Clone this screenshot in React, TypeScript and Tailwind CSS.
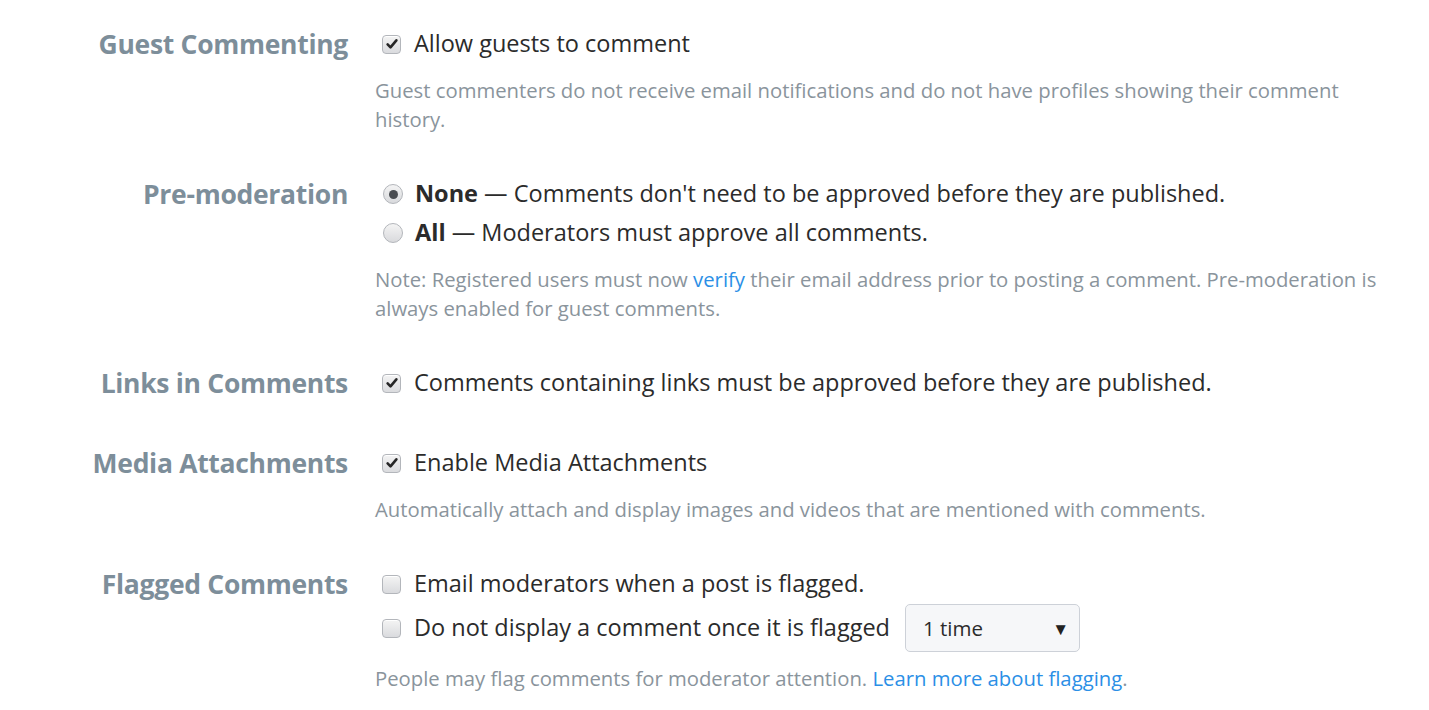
import React from "react";

function Check({ checked }: { checked?: boolean }) {
  return (
    <span className="mr-[13px] ml-[7px] flex h-[19px] w-[19px] shrink-0 items-center justify-center rounded-[4px] border border-[#b3b6bb] bg-gradient-to-b from-[#f4f4f4] to-[#dadbde] shadow-[inset_0_1px_0_#fff]">
      {checked && (
        <svg viewBox="0 0 16 16" className="h-[14px] w-[14px]">
          <path d="M3 8.5 L6.3 11.8 L13 3.8" fill="none" stroke="#262626" strokeWidth="3" strokeLinecap="round" strokeLinejoin="round" />
        </svg>
      )}
    </span>
  );
}

function Radio({ checked }: { checked?: boolean }) {
  return (
    <span className="mr-[12px] ml-[8px] flex h-[20px] w-[20px] shrink-0 items-center justify-center rounded-full border border-[#b3b6bb] bg-gradient-to-b from-[#f4f4f4] to-[#d9dadd]">
      {checked && <span className="h-[9px] w-[9px] rounded-full bg-[#4a4d52]" />}
    </span>
  );
}

function Section({ label, children }: { label: string; children: React.ReactNode }) {
  return (
    <div className="grid grid-cols-[348px_1fr] gap-x-[27px]">
      <div className="text-right text-[26.5px] font-bold leading-[40px] tracking-[-0.3px] text-[#7d8e9a]">{label}</div>
      <div>{children}</div>
    </div>
  );
}

function Line({ children, tall }: { children: React.ReactNode; tall?: boolean }) {
  return (
    <div className={`flex items-center text-[23.5px] text-[#2b2b2b] ${tall ? "h-[48px]" : "h-[40px]"}`}>{children}</div>
  );
}

function Help({ children }: { children: React.ReactNode }) {
  return <p className="mt-[12px] max-w-[1020px] text-[20.3px] leading-[29px] text-[#8a949c]">{children}</p>;
}

export default function App() {
  return (
    <div className="min-h-screen bg-white pt-[24px]" style={{ fontFamily: "'Open Sans', Lato, sans-serif" }}>
      <div className="flex flex-col gap-y-[40px]">
        <Section label="Guest Commenting">
          <Line>
            <Check checked />
            Allow guests to comment
          </Line>
          <Help>
            Guest commenters do not receive email notifications and do not have profiles showing their comment history.
          </Help>
        </Section>

        <Section label="Pre-moderation">
          <Line>
            <Radio checked />
            <span>
              <b className="font-bold">None</b> — Comments don't need to be approved before they are published.
            </span>
          </Line>
          <div className="-mt-px" />
          <Line>
            <Radio />
            <span>
              <b className="font-bold">All</b> — Moderators must approve all comments.
            </span>
          </Line>
          <Help>
            Note: Registered users must now <span className="text-[#2b8fe6]">verify</span> their email address prior to posting a comment. Pre-moderation is always enabled for guest comments.
          </Help>
        </Section>

        <Section label="Links in Comments">
          <Line>
            <Check checked />
            Comments containing links must be approved before they are published.
          </Line>
        </Section>

        <Section label="Media Attachments">
          <Line>
            <Check checked />
            Enable Media Attachments
          </Line>
          <Help>Automatically attach and display images and videos that are mentioned with comments.</Help>
        </Section>

        <Section label="Flagged Comments">
          <Line>
            <Check />
            Email moderators when a post is flagged.
          </Line>
          <Line tall>
            <Check />
            Do not display a comment once it is flagged
            <div className="ml-[15px] flex h-[48px] w-[175px] items-center justify-between rounded-[5px] border border-[#cdd1d8] bg-[#f6f7f9] pl-[17px] pr-[10px] text-[20.5px] text-[#2b2b2b]">
              <span>1 time</span>
              <span className="text-[17px] leading-none text-[#222]">▼</span>
            </div>
          </Line>
          <Help>
            People may flag comments for moderator attention. <span className="text-[#2b8fe6]">Learn more about flagging</span>.
          </Help>
        </Section>
      </div>
    </div>
  );
}
